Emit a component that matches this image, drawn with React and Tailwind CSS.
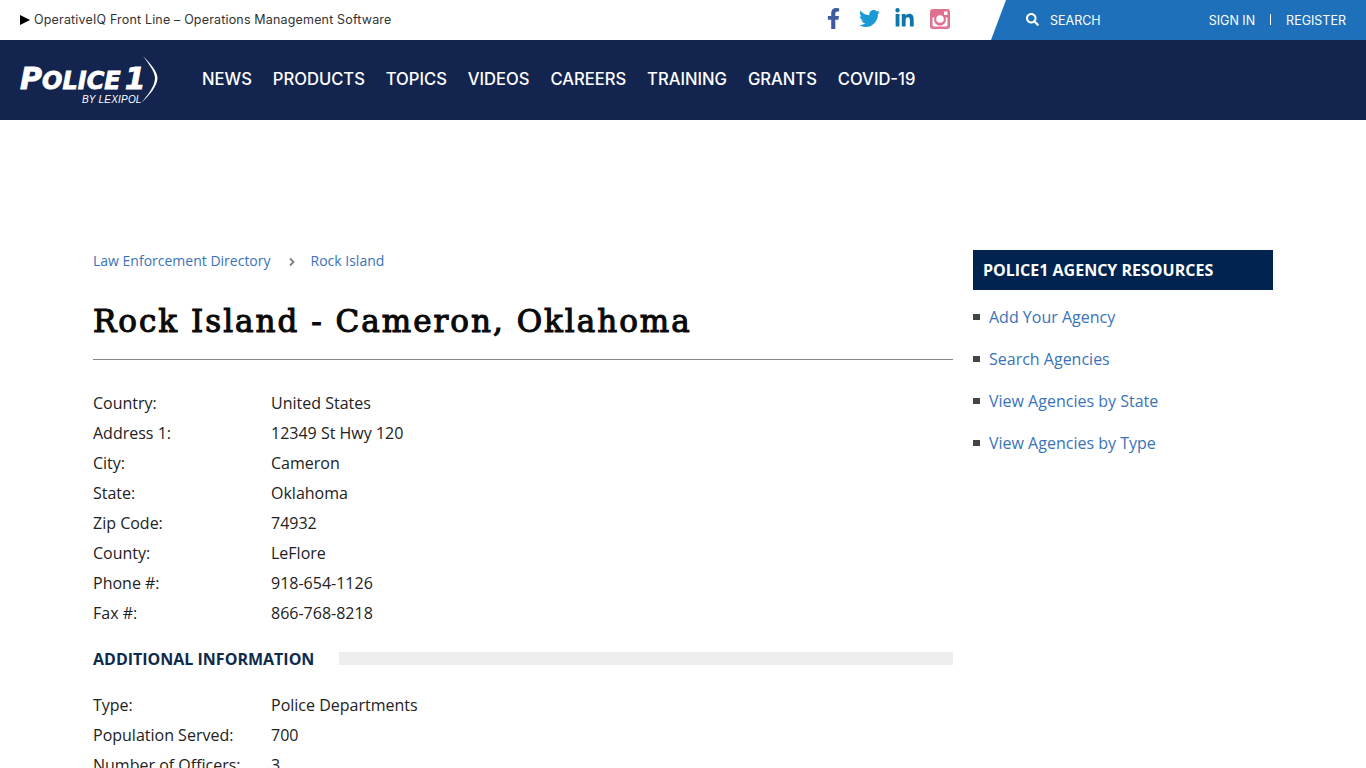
import { FaFacebookF, FaTwitter, FaLinkedinIn, FaSearch } from "react-icons/fa";

const navItems = ["NEWS", "PRODUCTS", "TOPICS", "VIDEOS", "CAREERS", "TRAINING", "GRANTS", "COVID-19"];

const details = [
  ["Country:", "United States"],
  ["Address 1:", "12349 St Hwy 120"],
  ["City:", "Cameron"],
  ["State:", "Oklahoma"],
  ["Zip Code:", "74932"],
  ["County:", "LeFlore"],
  ["Phone #:", "918-654-1126"],
  ["Fax #:", "866-768-8218"],
];

const additional = [
  ["Type:", "Police Departments"],
  ["Population Served:", "700"],
  ["Number of Officers:", "3"],
];

const resources = ["Add Your Agency", "Search Agencies", "View Agencies by State", "View Agencies by Type"];

const InfoRow = ({ label, value }) => (
  <div className="flex h-[30px] items-center text-[16px] text-[#222]">
    <div className="w-[178px]">{label}</div>
    <div>{value}</div>
  </div>
);

// old style instagram glyph, the package version has a different camera
const InstagramIcon = () => (
  <svg width="20" height="20" viewBox="0 0 20 20">
    <path
      fill="#e0718f"
      fillRule="evenodd"
      d="M3 0 H17 A3 3 0 0 1 20 3 V17 A3 3 0 0 1 17 20 H3 A3 3 0 0 1 0 17 V3 A3 3 0 0 1 3 0 Z M14 2.5 V6 H17.5 V2.5 Z M2.5 8.5 V16.5 A1 1 0 0 0 3.5 17.5 H16.5 A1 1 0 0 0 17.5 16.5 V8.5 H15.6 A6 6 0 1 1 4.4 8.5 Z M10 6.2 A3.8 3.8 0 1 0 10 13.8 A3.8 3.8 0 1 0 10 6.2 Z"
    />
  </svg>
);

const App = () => {
  return (
    <div className="h-[768px] overflow-hidden bg-white font-['Open_Sans',sans-serif]">
      <div className="flex h-10 items-center justify-between">
        <div className="flex items-center pl-5 font-['Inter',sans-serif] text-[12.5px] tracking-[0.17px] text-[#333]">
          <span className="mr-1 h-0 w-0 border-y-[5px] border-l-[10px] border-y-transparent border-l-black"></span>
          OperativeIQ Front Line – Operations Management Software
        </div>
        <div className="flex items-center">
          <div className="mb-[3px] mr-[41px] flex items-center text-[21px]">
            <FaFacebookF className="mr-[15px] text-[#3f5c9e]" />
            <FaTwitter className="mr-[14px] text-[#1c9ad6]" />
            <FaLinkedinIn className="mr-[15px] text-[#0e76a8]" />
            <InstagramIcon />
          </div>
          <div className="flex h-10 w-[375px] items-center bg-[#1f70ba] pl-[35px] pr-5 pt-[2px] font-['Inter',sans-serif] text-[12.5px] text-white [clip-path:polygon(15px_0,100%_0,100%_100%,0_100%)]">
            <FaSearch className="mb-[3px] mr-[11px] text-[13px]" />
            <span>SEARCH</span>
            <span className="ml-auto">SIGN IN</span>
            <span className="mx-[15px] mb-[3px] h-[11px] w-px bg-white"></span>
            <span>REGISTER</span>
          </div>
        </div>
      </div>

      <div className="flex h-20 items-center bg-[#13254e] pl-5 font-['Inter',sans-serif] text-white">
        <div className="relative h-[54px] w-[138px]">
          <div className="absolute left-0 top-[10px] flex items-baseline font-['DejaVu_Sans',sans-serif] text-[24px] font-bold italic leading-[32px] [-webkit-text-stroke:0.8px_white]">
            <span className="text-[30px]">P</span>
            <span>OLICE</span>
            <span className="ml-[4px] text-[30px]">1</span>
          </div>
          <div className="absolute left-[62px] top-[41px] font-['Liberation_Sans',sans-serif] text-[10px] italic leading-3 tracking-[0.2px]">
            BY LEXIPOL
          </div>
          <svg className="absolute left-[118px] top-0" width="22" height="52" viewBox="0 0 22 52" fill="white">
            <path d="M5 3 C13 11 19.5 19 19.5 25 C19.5 33 11 43 3 50 C10 42 17 33 17 25 C17 19 11 11 5 3 Z" />
          </svg>
        </div>
        <div className="mb-[1px] ml-[44px] flex gap-[20.9px] text-[16.6px] font-medium">
          {navItems.map((item) => (
            <span key={item}>{item}</span>
          ))}
        </div>
      </div>

      <div className="ml-[93px] mt-[130px] flex w-[1180px] justify-between">
        <div className="w-[860px]">
          <div className="flex h-[20px] items-center text-[14px] text-[#3a73b9]">
            <span>Law Enforcement Directory</span>
            <svg className="ml-[18px] mr-[16px] mt-[4px]" width="6" height="10" viewBox="0 0 6 10" fill="none" stroke="#808080" strokeWidth="1.8">
              <path d="M1 1.5 L4.5 5 L1 8.5" />
            </svg>
            <span>Rock Island</span>
          </div>
          <h1 className="mt-[31px] border-b border-[#888] pb-[17px] font-['DejaVu_Serif',serif] text-[31px] font-normal leading-[41px] tracking-[2px] text-[#0a0a0a] [-webkit-text-stroke:1.1px_#0a0a0a]">
            Rock Island - Cameron, Oklahoma
          </h1>
          <div className="mt-[28px]">
            {details.map(([label, value]) => (
              <InfoRow key={label} label={label} value={value} />
            ))}
          </div>
          <div className="mt-[16px] flex h-[30px] items-center">
            <span className="text-[16px] font-bold text-[#0e2a4d]">ADDITIONAL INFORMATION</span>
            <span className="mb-[2px] ml-[25px] h-[13px] flex-1 bg-[#eeeeee]"></span>
          </div>
          <div className="mt-[16px]">
            {additional.map(([label, value]) => (
              <InfoRow key={label} label={label} value={value} />
            ))}
          </div>
        </div>

        <div className="w-[300px]">
          <div className="flex h-10 items-center bg-[#00234f] pl-[10px] text-[16px] font-bold text-white">
            POLICE1 AGENCY RESOURCES
          </div>
          <ul className="mt-[6px]">
            {resources.map((item) => (
              <li key={item} className="flex h-[42px] items-center text-[16px] text-[#3a73b9]">
                <span className="mr-[9px] h-[6px] w-[7px] bg-[#444]"></span>
                {item}
              </li>
            ))}
          </ul>
        </div>
      </div>
    </div>
  );
};

export default App;
